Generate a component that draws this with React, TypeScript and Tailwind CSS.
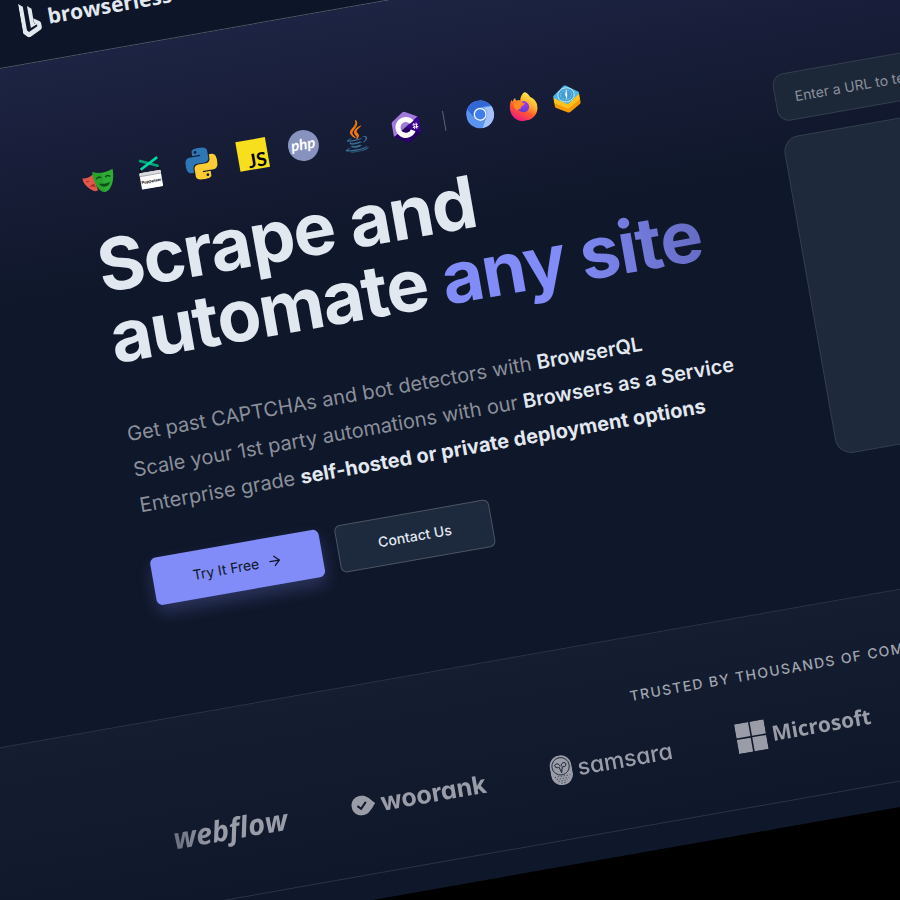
import React from 'react'
import { ArrowRight } from 'lucide-react'

const PlaywrightIcon = () => (
    <svg viewBox="0 0 32 32" className="h-8 w-8" aria-hidden="true">
        <path fill="#e2574c" d="M0 10c2.600 1 7.400.700 11-2l2.500 16.500c-1.600.900-3.500.400-5.500-1.200C4 20.500 0 15.500 0 10z" />
        <path fill="#a32f27" d="M3 14c1.200-.9 2.600-.9 3.600-.2-.9.900-2.500 1.100-3.600.2zM6 20c.8-1.900 3-2.900 5-2.400l.5 4c-1.500-1.800-3.200-2.400-5.500-1.600z" />
        <path fill="#2ead33" d="M11 5.500c6 3 13.600 3.200 20.500.300.300 6.500-1.600 14.500-6.200 19.200-2.600 2.500-5.600 3.200-8.400 1C12 22 10.200 12.500 11 5.500z" />
        <path fill="#1d8d22" d="M11 5.500c2.900 1.500 6.300 2.300 9.500 2.200l-.4 19.600c-1.100 0-2.200-.5-3.200-1.300C12 22 10.200 12.500 11 5.500z" opacity=".35" />
        <path fill="none" stroke="#0f4d1c" strokeWidth="1.500" strokeLinecap="round" d="M14.300 12.800c1-1.500 2.900-1.600 4.200-.4M23.300 12.400c1.200-1.300 3.100-1.300 4.200.1" />
        <path fill="#0f4d1c" d="M15.500 18c3.500 1.300 7.500 1.300 11.200 0-.6 2.500-2.900 4-5.500 4s-5-1.400-5.700-4z" />
    </svg>
)

const PuppeteerIcon = () => (
    <svg viewBox="0 0 32 32" className="h-8 w-8" aria-hidden="true">
        <path fill="none" stroke="#05070b" strokeWidth="1.400" d="M6.500 9v8M25 9v8" />
        <path fill="none" stroke="#00a878" strokeWidth="2.600" d="M7 2.500 25.500 11" />
        <path fill="none" stroke="#00d8a2" strokeWidth="2.600" d="M25.500 2 7 11.500" />
        <rect x="5" y="15" width="21.500" height="16.500" rx="1" fill="#fff" />
        <rect x="5" y="15" width="21.500" height="3" rx="1" fill="#d9dbde" />
        <path stroke="#8b8e93" strokeWidth=".7" d="M5 18.300h21.500" />
        <text x="15.750" y="26" textAnchor="middle" fontSize="4" fontWeight="700" fill="#111" fontFamily="Inter, sans-serif">Puppeteer</text>
    </svg>
)

const PythonIcon = () => (
    <svg viewBox="0 0 24 24" className="h-8 w-8" aria-hidden="true">
        <path fill="#2f76b4" d="M14.25.18l.9.2.73.26.59.3.45.32.34.34.25.34.16.33.1.3.04.26.02.2-.01.13V8.5l-.05.63-.13.55-.21.46-.26.38-.3.31-.33.25-.35.19-.35.14-.33.1-.3.07-.26.04-.21.02H8.77l-.69.05-.59.14-.5.22-.41.27-.33.32-.27.35-.2.36-.15.37-.1.35-.07.32-.04.27-.02.21v3.06H3.17l-.21-.03-.28-.07-.32-.12-.35-.18-.36-.26-.36-.36-.35-.46-.32-.59-.28-.73-.21-.88-.14-1.05-.05-1.23.06-1.22.16-1.04.24-.87.32-.71.36-.57.4-.44.42-.33.42-.24.4-.16.36-.1.32-.05.24-.01h.16l.06.01h8.16v-.83H6.18l-.01-2.75-.02-.37.05-.34.11-.31.17-.28.25-.26.31-.23.38-.2.44-.18.51-.15.58-.12.64-.1.71-.06.77-.04.84-.02 1.27.05zm-6.3 1.98l-.23.33-.08.41.08.41.23.34.33.22.41.09.41-.09.33-.22.23-.34.08-.41-.08-.41-.23-.33-.33-.22-.41-.09-.41.09z" />
        <path fill="#ffcd32" d="M21.040 6.110l.28.06.32.12.35.18.36.27.36.35.35.47.32.59.28.73.21.88.14 1.04.05 1.23-.06 1.23-.16 1.04-.24.86-.32.71-.36.57-.4.45-.42.33-.42.24-.4.16-.36.09-.32.05-.24.02-.16-.01h-8.22v.82h5.84l.01 2.76.02.36-.05.34-.11.31-.17.29-.25.25-.31.24-.38.2-.44.17-.51.15-.58.13-.64.09-.71.07-.77.04-.84.01-1.27-.04-1.07-.14-.9-.2-.73-.25-.59-.3-.45-.33-.34-.34-.25-.34-.16-.33-.1-.3-.04-.25-.02-.2.01-.13v-5.34l.05-.64.13-.54.21-.46.26-.38.3-.32.33-.24.35-.2.35-.14.33-.1.3-.06.26-.04.21-.02.13-.01h5.84l.69-.05.59-.14.5-.21.41-.28.33-.32.27-.35.2-.36.15-.36.1-.35.07-.32.04-.28.02-.21V6.07h2.09zm-6.470 14.250l-.23.33-.08.41.08.41.23.33.33.23.41.08.41-.08.33-.23.23-.33.08-.41-.08-.41-.23-.33-.33-.23-.41-.08-.41.08z" />
    </svg>
)

const JavaScriptIcon = () => (
    <svg viewBox="0 0 32 32" className="h-8 w-8" aria-hidden="true">
        <path fill="#f7df1e" d="M1 1h30v30H1z" />
        <text x="29" y="29" textAnchor="end" fontSize="19" fontWeight="700" fill="#000" fontFamily="Lato, sans-serif">JS</text>
    </svg>
)

const PhpIcon = () => (
    <svg viewBox="0 0 32 32" className="h-8 w-8" aria-hidden="true">
        <circle cx="15.500" cy="16" r="15.500" fill="#8892bf" />
        <text x="15.500" y="20" textAnchor="middle" fontSize="15" fontWeight="700" fontStyle="italic" fill="#fff" fontFamily="Lato, sans-serif">php</text>
    </svg>
)

const JavaIcon = () => (
    <svg viewBox="0 0 128 128" className="h-8 w-8" aria-hidden="true">
        <g fill="#3f7a9e" stroke="#3f7a9e" strokeWidth="1">
            <path d="M47.617 98.12s-4.767 2.774 3.397 3.71c9.892 1.13 14.947.968 25.845-1.092 0 0 2.871 1.795 6.873 3.351-24.439 10.47-55.308-.607-36.115-5.969zm-2.988-13.665s-5.348 3.959 2.823 4.805c10.567 1.091 18.91 1.18 33.354-1.6 0 0 1.993 2.025 5.132 3.131-29.542 8.64-62.446.68-41.309-6.336z" />
            <path d="M102.123 108.229s3.529 2.91-3.888 5.159c-14.102 4.272-58.706 5.56-71.094.171-4.451-1.938 3.899-4.625 6.526-5.192 2.739-.593 4.303-.485 4.303-.485-4.953-3.487-32.013 6.85-13.743 9.815 49.821 8.076 90.817-3.637 77.896-9.468zM49.912 70.294s-22.686 5.389-8.033 7.348c6.188.828 18.518.638 30.011-.326 9.39-.789 18.813-2.474 18.813-2.474s-3.308 1.419-5.704 3.053c-23.042 6.061-67.544 3.238-54.731-2.958 10.832-5.239 19.644-4.643 19.644-4.643zm40.697 22.747c23.421-12.167 12.591-23.86 5.032-22.285-1.848.385-2.677.72-2.677.72s.688-1.079 2-1.543c14.953-5.255 26.451 15.503-4.823 23.725 0-.002.359-.327.468-.617z" />
            <path d="M52.214 126.021c22.476 1.437 57-.8 57.817-11.436 0 0-1.571 4.032-18.577 7.231-19.186 3.612-42.854 3.191-56.887.874 0 .001 2.875 2.381 17.647 3.331z" />
        </g>
        <g fill="#f07811" stroke="#f07811" strokeWidth="4">
            <path d="M69.802 61.271c6.025 6.935-1.58 13.17-1.58 13.17s15.289-7.891 8.269-17.777c-6.559-9.215-11.587-13.792 15.635-29.58 0 .001-42.731 10.67-22.324 34.187z" />
            <path d="M76.491 1.587S89.459 14.563 64.188 34.51c-20.266 16.006-4.621 25.13-.007 35.559-11.831-10.673-20.509-20.07-14.688-28.815C58.041 28.42 81.722 22.195 76.491 1.587z" />
        </g>
    </svg>
)

const CSharpIcon = () => (
    <svg viewBox="0 0 32 32" className="h-8 w-8" aria-hidden="true">
        <path fill="#a179dc" d="M14.500.700a3 3 0 0 1 3 0L29 7.300 3 23.300c-.5-.5-.8-1.100-.8-1.800v-11c0-1.100.5-2 1.500-2.600z" />
        <path fill="#280068" d="M3 23.300 16 16l13.200 7.200c-.3.400-.6.700-1 .9l-10.700 7a3 3 0 0 1-3 0L3.700 24z" />
        <path fill="#390091" d="M29 7.300c.5.500.8 1.300.8 2.200v12c0 .6-.2 1.200-.6 1.700L16 16z" />
        <path fill="none" stroke="#fff" strokeWidth="5" d="M22.300 11.800a7.900 7.900 0 1 0 0 8.400" />
        <path stroke="#fff" strokeWidth="1" d="M24 13v6M26.300 13v6M22.500 14.800h5.500M22.500 17.200h5.500" />
    </svg>
)

const ChromiumIcon = () => (
    <svg viewBox="0 0 28 28" className="h-7 w-7" aria-hidden="true">
        <circle cx="14" cy="14" r="14" fill="#5b93f0" />
        <path fill="#3467d6" d="M1.900 7A14 14 0 0 1 26.100 7H14a7 7 0 0 0-6.500 4.500L7 15z" />
        <path fill="#a3c2fa" d="M26.600 8A14 14 0 0 1 14 28l6-10.500A7 7 0 0 0 18 8z" />
        <circle cx="14" cy="14" r="6.400" fill="#fff" />
        <circle cx="14" cy="14" r="5.200" fill="#3f7df0" />
    </svg>
)

const FirefoxIcon = () => (
    <svg viewBox="0 0 28 28" className="h-7 w-7" aria-hidden="true">
        <defs>
            <linearGradient id="fox" x1=".85" y1=".1" x2=".2" y2=".95">
                <stop offset="0" stopColor="#fff04a" />
                <stop offset=".35" stopColor="#ffb02e" />
                <stop offset=".62" stopColor="#ff5a2e" />
                <stop offset="1" stopColor="#f0128a" />
            </linearGradient>
            <radialGradient id="globe" cx=".6" cy=".2" r=".9">
                <stop offset="0" stopColor="#a63bf0" />
                <stop offset="1" stopColor="#5b3ad6" />
            </radialGradient>
        </defs>
        <path fill="url(#fox)" d="M17.500-.5c2.500 1.600 4 4 4.700 6.200C25 7.500 27.800 11 27.900 15c0 7.600-6.200 13.500-13.900 13.500S.2 22.500.2 14.800C.2 11 1.700 7.500 3.300 5c.2 1 .4 1.700.8 2.300C4.800 6 5.800 4.800 7.300 4c0 1.200.2 2 .8 2.800 1.400-.2 2.700 0 3.900.6C12 4.600 14.500 1.500 17.500-.5z" />
        <circle cx="14" cy="14" r="5.600" fill="url(#globe)" />
        <path fill="#ff8a1f" d="M4.500 10.500c2.500-2.700 5.800-3.500 9-1.700-.2.900.5 1.600 2.200 1.900-.5 1.500-2.300 1.900-3.600 2.700-1 .7-1 1.700-1.600 2.600-1.500-1-2.400-.5-3.100.8-1.700-1.300-2.900-3.500-2.900-6.300z" />
    </svg>
)

const WebkitIcon = () => (
    <svg viewBox="0 0 28 28" className="h-7 w-7" aria-hidden="true">
        <path fill="#f59a00" d="M1 15v4.500c0 .7.400 1.200 1 1.500l10.800 6.400c.8.400 1.600.400 2.400 0L26 21c.6-.3 1-.8 1-1.500V15z" />
        <path fill="#ffc21c" d="M1 10.500v4.700c0 .7.400 1.200 1 1.500l10.800 6.400c.8.400 1.600.400 2.400 0L26 16.700c.6-.3 1-.8 1-1.500v-4.700z" />
        <path fill="#4db4e4" d="M12.800.4c.8-.5 1.600-.5 2.400 0L26.400 8.400c1 .7 1 1.900 0 2.600l-11.200 7.600c-.8.500-1.600.500-2.400 0L1.600 11c-1-.7-1-1.900 0-2.600z" />
        <ellipse cx="14" cy="9.700" rx="8.200" ry="7" fill="#3f9fd2" stroke="#c9ecfb" strokeWidth=".9" />
        <ellipse cx="14" cy="9.700" rx="5.600" ry="4.800" fill="none" stroke="#a5dcf4" strokeWidth=".9" strokeDasharray=".8 1" />
        <path fill="#fff" d="m15.200 4 0 6-1.200 4.500-1-5z" />
    </svg>
)

const BrowserlessLogo = () => (
    <svg viewBox="0 0 20 35" className="h-[35px] w-5" fill="#e2e8f0" aria-hidden="true">
        <path d="M0 0 4.300 3.500V27.500L6 29.500 15.200 25.300V23.500L12.800 21.800 12.500 16.800 18.500 20.800 19.500 22.500V27.200L18.500 29 6.500 34.700 4.300 34.700 0 30z" />
        <path d="M8.500 3.500 12.500 7.200V21.700L15.200 23.200 8.500 26z" />
    </svg>
)

const WoorankMark = () => (
    <svg viewBox="0 0 24 20" className="h-5 w-6" aria-hidden="true">
        <path fill="#9a9da8" d="M10 0c5.500 0 8.500 3.500 14 10-5.500 6.500-8.500 10-14 10A10 10 0 0 1 10 0z" />
        <path fill="none" stroke="#10182b" strokeWidth="2" d="m6 10 3.200 3.200 5.800-6" />
    </svg>
)

const OwlMark = () => (
    <svg viewBox="0 0 22 30" className="h-[30px] w-[22px]" aria-hidden="true">
        <rect width="22" height="30" rx="11" fill="#9a9da8" />
        <circle cx="11" cy="11" r="8.700" fill="none" stroke="#10182b" strokeWidth=".8" />
        <path fill="none" stroke="#10182b" strokeWidth=".9" d="M10.300 11c0-2.800-3.300-4.200-4.800-2-.6 2 1.500 3.500 3.300 2.800M11.700 11c0-2.800 3.300-4.200 4.800-2 .6 2-1.500 3.500-3.300 2.800M9.300 11.500 11 17.500l1.700-6" />
        <path stroke="#10182b" strokeWidth=".8" strokeDasharray="1 2" d="M3.500 21h15.500M5 23.300h12.500M6.500 25.500h9.500M9 27.700h5" />
    </svg>
)

const MicrosoftMark = () => (
    <svg viewBox="0 0 30 30" className="h-[30px] w-[30px]" aria-hidden="true">
        <path fill="#9a9da8" d="M0 0h14.200v14.200H0zM15.800 0H30v14.200H15.800zM0 15.800h14.200V30H0zM15.800 15.800H30V30H15.800z" />
    </svg>
)

const Header = () => (
    <header className="h-[68px] border-b border-[#4f5966] bg-[#0d1628] pl-[217px] pt-[7px]">
        <a href="/" className="inline-flex items-center gap-[7px] font-['Open_Sans',sans-serif] text-[21px] font-bold leading-[35px] text-slate-200">
            <BrowserlessLogo />
            browserless
        </a>
    </header>
)

const Hero = () => (
    <main className="bg-[linear-gradient(to_bottom,#1d2443,#181e39_90px,#0f172a_240px)] pl-[250px]">
        <div className="flex max-w-[1246px] pb-28 pt-28">
            <div className="flex-1">
                <div className="flex items-center gap-5">
                    <PlaywrightIcon />
                    <PuppeteerIcon />
                    <PythonIcon />
                    <JavaScriptIcon />
                    <PhpIcon />
                    <JavaIcon />
                    <CSharpIcon />
                    <span className="mx-[2px] h-5 w-px bg-[#5b6270]" />
                    <div className="flex items-center gap-4">
                        <ChromiumIcon />
                        <FirefoxIcon />
                        <WebkitIcon />
                    </div>
                </div>
                <h1 className="mt-8 text-[72px] font-bold leading-[72px] tracking-[-0.02em] text-slate-200">
                    Scrape and<br />
                    automate <span className="bg-linear-to-r from-[#818cf8] from-45% to-[#666cc4] bg-clip-text text-transparent">any site</span>
                </h1>
                <ul className="mt-11 text-xl leading-9 text-[#8b909b]">
                    <li>
                        Get past CAPTCHAs and bot detectors with <strong className="font-semibold text-slate-200">BrowserQL</strong>
                    </li>
                    <li>
                        Scale your 1st party automations with our <strong className="font-semibold text-slate-200">Browsers as a Service</strong>
                    </li>
                    <li>
                        Enterprise grade <strong className="font-bold text-slate-200">self-hosted or private deployment options</strong>
                    </li>
                </ul>
                <div className="mt-9 flex gap-4 text-sm">
                    <button type="button" className="flex h-12 items-center gap-2 rounded-md bg-[#818cf8] px-10 text-[#0f172a] shadow-[0_8px_16px_rgba(129,140,248,0.25)]">
                        Try It Free
                        <ArrowRight className="h-4 w-4" />
                    </button>
                    <button type="button" className="h-12 rounded-md border border-[#4b5563] bg-slate-800 px-10 font-medium text-slate-200">
                        Contact Us
                    </button>
                </div>
            </div>
            <div className="w-[550px] pt-7">
                <input
                    type="url"
                    aria-label="URL"
                    placeholder="Enter a URL to test"
                    className="h-12 w-full rounded-xl border border-[#333f4e] bg-[#1c2738] px-[19px] text-sm text-slate-200 placeholder:text-[#8b909b] focus:outline-none"
                />
                <div className="mt-4 h-[322px] rounded-2xl border border-[#333f4e] bg-[#1e293b]" />
            </div>
        </div>
    </main>
)

const TrustedBy = () => (
    <section className="border-y border-[#2a3347] bg-linear-to-b from-[#151d30] to-[#0f172a] pb-[49px] pt-12">
        <h2 className="ml-[250px] max-w-[1236px] text-center text-sm font-medium tracking-widest text-[#a0a4ae]">
            TRUSTED BY THOUSANDS OF COMPANIES
        </h2>
        <div className="ml-[154px] mt-[31px] flex h-10 items-center gap-[65px] pl-[71px] text-[#9a9da8] [mask-image:linear-gradient(to_right,transparent,black_110px)]">
            <span className="font-['Open_Sans',sans-serif] text-[29px] font-bold italic leading-10">webflow</span>
            <span className="flex items-center gap-[6px] text-[25px] font-bold leading-10 [font-feature-settings:'cv11']">
                <WoorankMark />
                woorank
            </span>
            <span className="flex items-center gap-[6px] text-[23px] font-medium leading-10 [font-feature-settings:'cv11']">
                <OwlMark />
                samsara
            </span>
            <span className="flex items-center gap-[6px] font-['Open_Sans',sans-serif] text-[21px] font-bold leading-10">
                <MicrosoftMark />
                Microsoft
            </span>
        </div>
    </section>
)

const App: React.FC = () => {
    return (
        <div className="h-screen overflow-hidden bg-black font-['Inter',sans-serif]">
            <div className="-ml-[200px] w-[170vw] origin-[200px_0px] -rotate-10 bg-[#0f182b] pb-[25px]">
                <Header />
                <Hero />
                <TrustedBy />
            </div>
        </div>
    )
}

export default App
